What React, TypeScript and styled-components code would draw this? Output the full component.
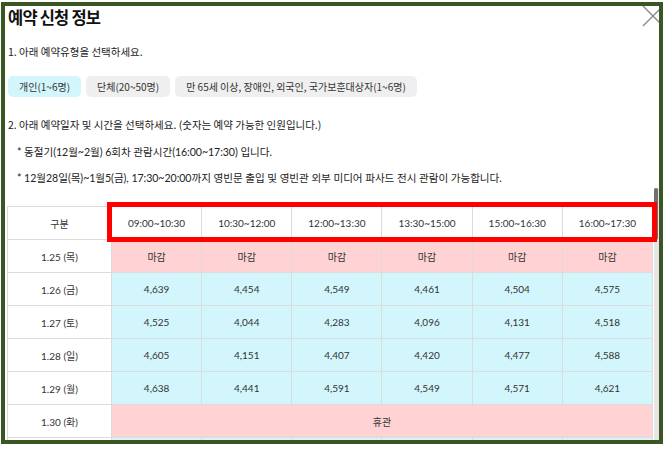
import styled, { createGlobalStyle } from "styled-components";

const GlobalStyle = createGlobalStyle`
  html, body {
    margin: 0;
    padding: 0;
    background: #fff;
  }
  body {
    font-family: Lato, "Noto Sans CJK KR", sans-serif;
    color: #222;
  }
`;

const TIMES = [
  "09:00~10:30",
  "10:30~12:00",
  "12:00~13:30",
  "13:30~15:00",
  "15:00~16:30",
  "16:00~17:30",
];

type Row = { day: string; counts?: string[]; closed?: boolean; holiday?: boolean };

const ROWS: Row[] = [
  { day: "1.25 (목)", closed: true },
  { day: "1.26 (금)", counts: ["4,639", "4,454", "4,549", "4,461", "4,504", "4,575"] },
  { day: "1.27 (토)", counts: ["4,525", "4,044", "4,283", "4,096", "4,131", "4,518"] },
  { day: "1.28 (일)", counts: ["4,605", "4,151", "4,407", "4,420", "4,477", "4,588"] },
  { day: "1.29 (월)", counts: ["4,638", "4,441", "4,591", "4,549", "4,571", "4,621"] },
  { day: "1.30 (화)", holiday: true },
  { day: "1.31 (수)", counts: ["4,612", "4,430", "4,520", "4,498", "4,533", "4,590"] },
];

const THUMB_HEIGHT = 52;

const App = () => {
  return (
    <>
      <GlobalStyle />
      <Frame>
        <CloseButton aria-label="닫기">
          <svg width="24" height="24" viewBox="0 0 24 24">
            <path d="M2 2 L22 22 M22 2 L2 22" stroke="#8a8a8a" strokeWidth="1.4" fill="none" />
          </svg>
        </CloseButton>

        <Title>예약 신청 정보</Title>

        <Question>1. 아래 예약유형을 선택하세요.</Question>
        <TypeRow>
          <TypeButton $active>개인(1~6명)</TypeButton>
          <TypeButton>단체(20~50명)</TypeButton>
          <TypeButton>만 65세 이상, 장애인, 외국인, 국가보훈대상자(1~6명)</TypeButton>
        </TypeRow>

        <Question $gap={20}>2. 아래 예약일자 및 시간을 선택하세요. (숫자는 예약 가능한 인원입니다.)</Question>
        <Note $gap={11}>* 동절기(12월~2월) 6회차 관람시간(16:00~17:30) 입니다.</Note>
        <Note $gap={10}>
          * 12월28일(목)~1월5(금), 17:30~20:00까지 영빈문 출입 및 영빈관 외부 미디어 파사드 전시 관람이 가능합니다.
        </Note>

        <ScrollArea>
          <TableWrap>
            <Table>
              <colgroup>
                <col style={{ width: 104 }} />
                {TIMES.map((t) => (
                  <col key={t} />
                ))}
              </colgroup>
              <thead>
                <tr>
                  <Cell as="th">구분</Cell>
                  {TIMES.map((t) => (
                    <Cell as="th" key={t}>
                      {t}
                    </Cell>
                  ))}
                </tr>
              </thead>
              <tbody>
                {ROWS.map((r) => (
                  <tr key={r.day}>
                    <Cell>{r.day}</Cell>
                    {r.holiday ? (
                      <Cell colSpan={6} $tone="closed">
                        휴관
                      </Cell>
                    ) : r.closed ? (
                      TIMES.map((t) => (
                        <Cell key={t} $tone="closed">
                          마감
                        </Cell>
                      ))
                    ) : (
                      r.counts!.map((c, i) => (
                        <Cell key={i} $tone="open">
                          {c}
                        </Cell>
                      ))
                    )}
                  </tr>
                ))}
              </tbody>
            </Table>
          </TableWrap>
          <Track>
            <Thumb style={{ height: THUMB_HEIGHT }} />
          </Track>
        </ScrollArea>

        <Highlight />
      </Frame>
    </>
  );
};

const Frame = styled.div`
  position: relative;
  box-sizing: border-box;
  margin: 2px 0 0 1px;
  width: 662px;
  height: 442px;
  border: 4px solid #3a5622;
  padding-left: 3px;
  overflow: hidden;
  display: flex;
  flex-direction: column;
`;

const CloseButton = styled.div`
  position: absolute;
  top: -2px;
  right: -6px;
  width: 24px;
  height: 24px;
  line-height: 0;
`;

const Title = styled.h1`
  margin: 0;
  font-family: "Noto Sans CJK KR", sans-serif;
  font-size: 16.5px;
  letter-spacing: -0.8px;
  font-weight: 700;
  line-height: 22px;
  color: #111;
`;

const Question = styled.p<{ $gap?: number }>`
  margin: ${({ $gap }) => $gap ?? 16}px 0 0;
  font-family: "Noto Sans CJK KR", sans-serif;
  font-size: 10.5px;
  line-height: 16px;
  color: #222;
`;

const Note = styled.p<{ $gap: number }>`
  margin: ${({ $gap }) => $gap}px 0 0 9px;
  font-family: Lato, "Noto Sans CJK KR", sans-serif;
  font-size: 10.6px;
  letter-spacing: -0.05px;
  line-height: 16px;
  color: #222;
`;

const TypeRow = styled.div`
  display: flex;
  gap: 5px;
  margin-top: 16px;
`;

const TypeButton = styled.button<{ $active?: boolean }>`
  height: 21px;
  padding: 0 11px;
  border: none;
  border-radius: 5px;
  background: ${({ $active }) => ($active ? "#d3f6fc" : "#efefef")};
  font-family: "Noto Sans CJK KR", sans-serif;
  font-size: 10px;
  color: #333;
  white-space: nowrap;
`;

const ScrollArea = styled.div`
  flex: 1;
  min-height: 0;
  margin: 2px 0 0 -1px;
  display: flex;
`;

const TableWrap = styled.div`
  flex: 1;
  padding-top: 18px;
  overflow: hidden;
`;

const Track = styled.div`
  width: 5px;
  background: #e6e6e6;
`;

const Thumb = styled.div`
  width: 4px;
  background: #6f6f6f;
  border-radius: 2px;
`;

const Table = styled.table`
  width: 646px;
  border-collapse: collapse;
  table-layout: fixed;
`;

const Cell = styled.td<{ $tone?: "closed" | "open" }>`
  height: 32px;
  padding: 0;
  border: 1px solid #dcdcdc;
  text-align: center;
  font-family: Lato, "Noto Sans CJK KR", sans-serif;
  font-size: 10px;
  font-weight: 400;
  color: #333;
  background: ${({ $tone }) =>
    $tone === "closed" ? "#ffd3d3" : $tone === "open" ? "#d3f6fd" : "#fff"};
`;

const Highlight = styled.div`
  position: absolute;
  left: 102px;
  top: 196px;
  width: 550px;
  height: 40px;
  box-sizing: border-box;
  border: 5px solid #ff0000;
  pointer-events: none;
`;

export default App;
